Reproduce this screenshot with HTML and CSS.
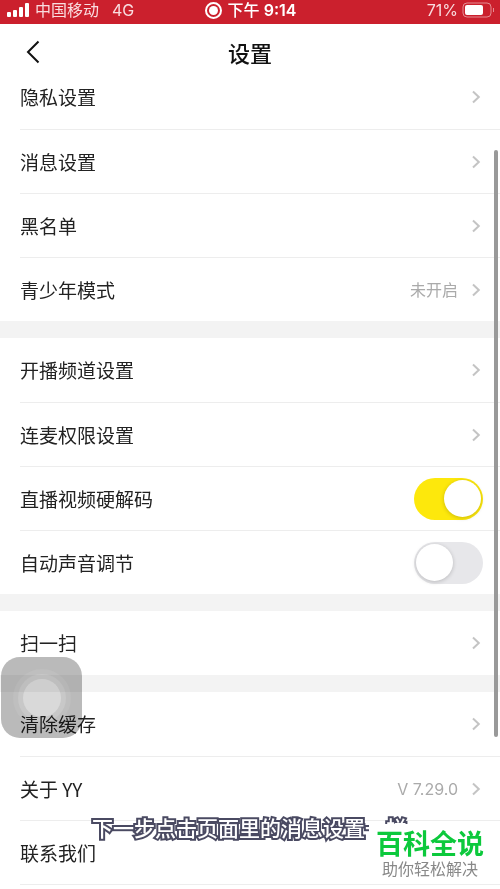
FILE: index.html
```html
<!DOCTYPE html>
<html lang="zh-CN">
<head>
<meta charset="utf-8">
<meta name="viewport" content="width=device-width, initial-scale=1">
<title>设置</title>
<link rel="stylesheet" href="styles.css">
</head>
<body>
<svg class="defs" aria-hidden="true"><symbol id="chevron" viewBox="0 0 10 14"><path d="M2 1.5 7.8 7 2 12.5"/></symbol></svg>
<div class="status">
  <div class="status-left">
    <svg class="signal" viewBox="0 0 23 14" aria-hidden="true"><rect x="0" y="9" width="4" height="5" rx="1"/><rect x="6" y="7" width="4" height="7" rx="1"/><rect x="12" y="4" width="4" height="10" rx="1"/><rect x="18" y="0" width="4" height="14" rx="1"/></svg>
    <span>中国移动</span><span class="network">4G</span>
  </div>
  <div class="status-time">
    <svg class="record" viewBox="0 0 17 17" aria-hidden="true"><circle cx="8.500" cy="8.500" r="7.500"/><circle class="dot" cx="8.500" cy="8.500" r="4.500"/></svg>
    <span>下午 <b>9:14</b></span>
  </div>
  <div class="status-right">
    <span>71%</span>
    <svg class="battery" viewBox="0 0 33 16" aria-hidden="true"><rect class="shell" x="1" y="1" width="28" height="14" rx="4"/><rect class="level" x="3" y="3" width="18" height="10" rx="2"/><path class="shell" d="M31.500 6v4"/></svg>
  </div>
</div>
<header class="header">
  <button class="back" type="button" aria-label="返回"><svg viewBox="0 0 14 24" aria-hidden="true"><path d="M12.500 1.500 2 12l10.500 10.500"/></svg></button>
  <h1>设置</h1>
</header>
<main>
  <section class="group">
    <a class="row" href="#"><span>隐私设置</span><svg class="chev"><use href="#chevron"/></svg></a>
    <a class="row" href="#"><span>消息设置</span><svg class="chev"><use href="#chevron"/></svg></a>
    <a class="row" href="#"><span>黑名单</span><svg class="chev"><use href="#chevron"/></svg></a>
    <a class="row" href="#"><span>青少年模式</span><span class="value">未开启</span><svg class="chev"><use href="#chevron"/></svg></a>
  </section>
  <section class="group">
    <a class="row" href="#"><span>开播频道设置</span><svg class="chev"><use href="#chevron"/></svg></a>
    <a class="row" href="#"><span>连麦权限设置</span><svg class="chev"><use href="#chevron"/></svg></a>
    <label class="row"><span>直播视频硬解码</span><input class="switch" type="checkbox" checked></label>
    <label class="row"><span>自动声音调节</span><input class="switch" type="checkbox"></label>
  </section>
  <section class="group">
    <a class="row" href="#"><span>扫一扫</span><svg class="chev"><use href="#chevron"/></svg></a>
  </section>
  <section class="group">
    <a class="row" href="#"><span>清除缓存</span><svg class="chev"><use href="#chevron"/></svg></a>
    <a class="row" href="#"><span>关于 YY</span><span class="value">V 7.29.0</span><svg class="chev"><use href="#chevron"/></svg></a>
    <a class="row last" href="#"><span>联系我们</span></a>
  </section>
</main>
<div class="thumb"></div>
<button class="assist" type="button" aria-label="辅助触控"><span></span></button>
<p class="caption">下一步点击页面里的消息设置一栏</p>
<div class="brand"><strong>百科全说</strong><span>助你轻松解决</span></div>
</body>
</html>
```
FILE: styles.css
```css
* { box-sizing: border-box; }

body {
  position: relative;
  min-height: 100vh;
  margin: 0;
  overflow: hidden;
  background: #fff;
  color: #222;
  font-family: "Noto Sans CJK SC", sans-serif;
  font-size: 19px;
}

.defs { position: absolute; width: 0; height: 0; }

.status {
  display: grid;
  grid-template-columns: 1fr auto 1fr;
  align-items: center;
  height: 24px;
  padding: 0 5px 4px 7px;
  background: #cb202d;
  color: #f9dcdf;
  font-family: Inter, "Noto Sans CJK SC", sans-serif;
  font-size: 16px;
  line-height: 20px;
}

.status-left, .status-time, .status-right { display: flex; align-items: center; gap: 5px; }
.status-right { justify-content: flex-end; gap: 4px; }
.status-time { color: #fff; font-weight: 500; }
.status-time b { font-weight: 600; }
.network { margin-left: 8px; }
.signal { width: 23px; height: 14px; fill: #fff; }
.record { width: 17px; height: 17px; fill: none; stroke: #fff; stroke-width: 2; }
.record .dot { fill: #fff; stroke: none; }
.battery { width: 33px; height: 16px; }
.shell { fill: none; stroke: #e58b92; stroke-width: 1; }
.level { fill: #fff; }

.header {
  display: grid;
  grid-template-columns: 48px 1fr 48px;
  align-items: center;
  height: 41px;
  padding: 14px 2px 0;
}

.header h1 { margin: 0; color: #111; font-size: 22px; font-weight: 500; line-height: 24px; text-align: center; }

.back { display: flex; justify-content: flex-end; padding: 0 10px 0 0; border: 0; background: none; }
.back svg { width: 14px; height: 24px; fill: none; stroke: #111; stroke-width: 2; }

.group + .group { border-top: 17px solid #f3f3f3; }

.row {
  display: flex;
  align-items: center;
  height: 64px;
  margin-left: 20px;
  padding-right: 19px;
  color: inherit;
  line-height: 28px;
  text-decoration: none;
}

.row + .row { border-top: 1px solid #ededed; }
.row.last { height: 65px; border-bottom: 1px solid #ededed; }
.row > :last-child:not(:first-child) { margin-left: auto; }
.row .value { margin-left: auto; color: #aaa; font-family: Inter, "Noto Sans CJK SC", sans-serif; font-size: 16px; }
.row .value + .chev:last-child { margin-left: 13px; }
.chev { width: 10px; height: 14px; fill: none; stroke: #c4c4c4; stroke-width: 2; }

.switch {
  appearance: none;
  width: 69px;
  height: 42px;
  margin: 0;
  border-radius: 21px;
  background: #e7e7ea;
}

.switch::before {
  content: "";
  display: block;
  width: 37px;
  height: 37px;
  margin: 2px;
  border-radius: 50%;
  background: #fff;
  box-shadow: 0 1px 4px rgba(0, 0, 0, .2);
}

.switch:checked { background: #fde80c; }
.switch:checked::before { margin-left: 30px; }
label.row { padding-right: 17px; }

.thumb { position: absolute; top: 150px; right: 2px; width: 4px; height: 587px; border-radius: 2px; background: #999; }

.assist {
  position: absolute;
  top: 657px;
  left: 1px;
  display: grid;
  place-items: center;
  width: 81px;
  height: 81px;
  padding: 0;
  border: 0;
  border-radius: 19px;
  background: #bababa;
  mix-blend-mode: multiply;
}

.assist span { width: 38px; height: 38px; border-radius: 50%; background: #d9d9d9; box-shadow: 0 0 0 5px #c8c8c8, 0 0 0 10px #bfbfbf; }

.caption {
  position: absolute;
  top: 814px;
  left: 92px;
  margin: 0;
  color: #fff;
  font-size: 21px;
  font-weight: 500;
  line-height: 26px;
  white-space: nowrap;
  -webkit-text-stroke: 4px #4a4a62;
  paint-order: stroke fill;
}

.brand {
  position: absolute;
  top: 824px;
  right: 9px;
  display: flex;
  flex-direction: column;
  align-items: center;
  width: 122px;
  padding-top: 4px;
  background: #fff;
}

.brand strong { color: #0cc93c; font-size: 27px; font-weight: 700; line-height: 30px; }
.brand span { color: #888; font-size: 16px; line-height: 20px; }
```
